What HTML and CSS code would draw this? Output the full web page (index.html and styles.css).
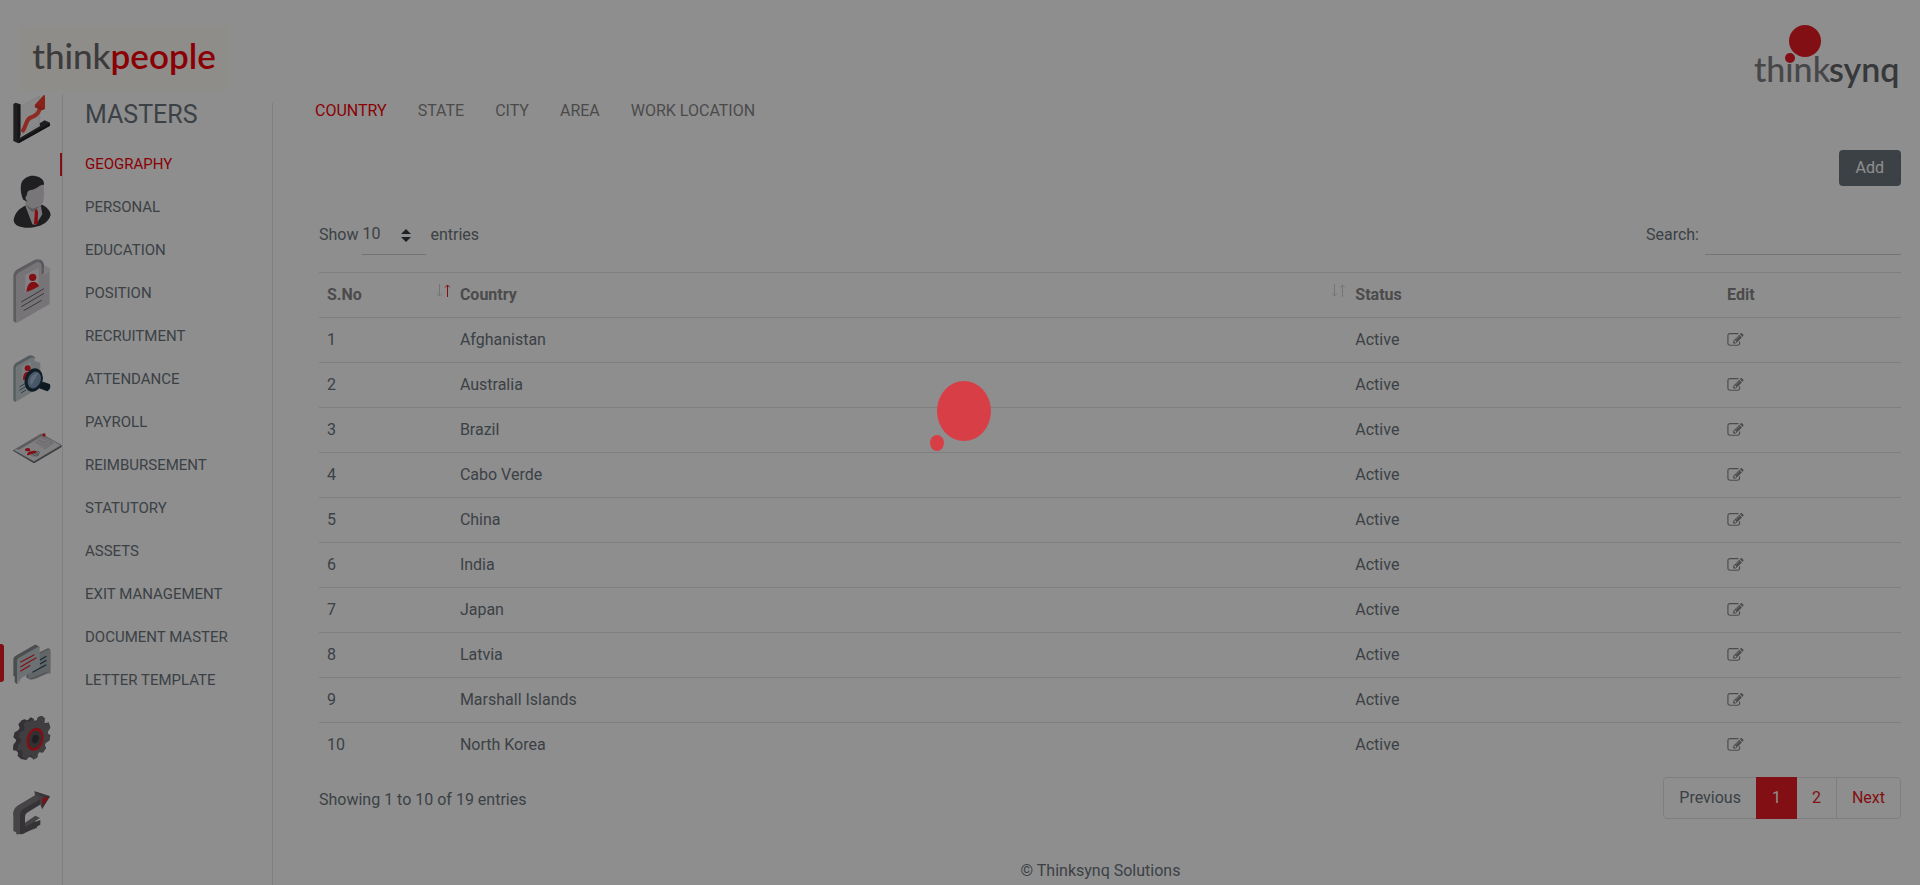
FILE: index.html
```html
<!DOCTYPE html>
<html lang="en">
<head>
<meta charset="utf-8">
<meta name="viewport" content="width=device-width, initial-scale=1">
<title>Masters - Geography</title>
<link rel="stylesheet" href="styles.css">
</head>
<body>
<svg class="defs" aria-hidden="true">
  <symbol id="edit" viewBox="0 0 1792 1536">
    <path d="M888 1056l116-116-152-152-116 116v56h96v96h56zm440-720q-16-16-33 1l-350 350q-17 17-1 33t33-1l350-350q17-17 1-33zm80 594v190q0 119-84.500 203.500t-203.500 84.500h-832q-119 0-203.500-84.500t-84.500-203.500v-832q0-119 84.500-203.500t203.500-84.500h832q63 0 117 25 15 7 18 23 3 17-9 29l-49 49q-14 14-32 8-23-6-45-6h-832q-66 0-113 47t-47 113v832q0 66 47 113t113 47h832q66 0 113-47t47-113v-126q0-13 9-22l64-64q15-15 35-7t20 29zm-96-738l288 288-672 672h-288v-288zm444 132l-92 92-288-288 92-92q28-28 68-28t68 28l152 152q28 28 28 68t-28 68z"/>
  </symbol>
</svg>
<div class="page">
  <header class="top">
    <a class="logo-people" href="#"><span>think</span><b>people</b></a>
    <a class="logo-synq" href="#" aria-label="thinksynq">
      <svg viewBox="0 0 150 70" role="img">
        <text class="synq-light" x="0" y="58">think</text>
        <text class="synq-bold" x="75" y="58">synq</text>
        <circle class="brand-fill" cx="51" cy="17" r="16"/>
        <circle class="brand-fill" cx="36" cy="34" r="5"/>
      </svg>
    </a>
  </header>
  <div class="body">
    <nav class="rail" aria-label="Modules">
      <div class="rail-group">
        <a href="#" aria-label="Dashboard">
          <svg width="38" height="50" viewBox="38 42 114 150">
            <path fill="#f1eff2" fill-opacity=".7" stroke="#c4c2c6" d="M60 80L118 48V134L60 166z"/>
            <path fill="#38363b" d="M39 72l7-4 14 5v95l-6 22-15-7z"/>
            <path fill="#29272c" d="M52 75l8-3v92l-8 24z"/>
            <path fill="#38363b" d="M54 176l65-38-1-8 15-9 16 7v9L55 190z"/>
            <path fill="#232126" d="M54 182l95-53v8L55 190z"/>
            <path fill="none" stroke="#ff4c3c" stroke-width="12" stroke-linejoin="round" stroke-linecap="round" d="M68 152c9-14 9-31 20-38 15-5 21-8 26-18l7-14"/>
            <path fill="#f7402f" d="M131 44l3 3v40l-10 4-20-9-1-7z"/>
            <path fill="#d93a30" d="M104 82l20 8 10-4-26-12z"/>
          </svg>
        </a>
        <a href="#" aria-label="Employees">
          <svg width="38" height="53" viewBox="38 284 114 159">
            <path fill="#38363b" d="M40 418c4-22 16-33 34-42l52-3c14 8 24 17 25 31-7 26-35 36-61 38-22 2-51-4-50-24z"/>
            <path fill="#d9d5da" d="M74 342c0-14 6-22 16-24l40-10 1 34c0 20-4 31-13 39l-22 8-20-12z"/>
            <path fill="#d9d5da" d="M74 374l22 13 26-9 4 24-20 32-10-2z"/>
            <path fill="#a8a4ab" d="M74 372l22 13 24-8-20 17-8-1z"/>
            <path fill="#ee1822" d="M104 389l6-2 3 9-1 36-9 1-2-4z"/>
            <path fill="#38363b" d="M84 366l-15-8c-8-14-10-40-5-52 8-14 24-22 40-19 17 2 29 13 27 27-10-5-21 14-40 15-9 3-11 7-11 16-7 4-5 15 4 21z"/>
          </svg>
        </a>
        <a href="#" aria-label="Profile">
          <svg width="38" height="65" viewBox="38 41 114 195">
            <path fill="#aaa6ad" d="M39 92c0-11 6-17 15-22l48-26c10-5 20-2 26 4l-76 44-4 141-9-5z"/>
            <path fill="#d4d0d4" d="M47 97c0-9 4-13 11-17l52-30c9-5 18-3 18 7v14l20 2v103l-95 55q-6 4-6-3z"/>
            <path fill="#a09ca4" d="M108 50c14-6 22-3 23 9v24l-7 4V64c0-10-4-14-16-14z"/>
            <path fill="#e4e1e4" d="M131 60l18 8v10l-19 12z"/>
            <path fill="#ebe8eb" d="M75 89l40-22v53l-41 23z"/>
            <circle cx="97" cy="96" r="11" fill="#e91b23"/>
            <path fill="#e91b23" d="M78 140c2-15 5-25 16-30h10c7 3 11 9 12 13l-20 10z"/>
            <path fill="none" stroke="#68646b" stroke-width="3" d="M63 170l68-40M63 184l68-40M70 196l54-31"/>
          </svg>
        </a>
        <a href="#" aria-label="Search records">
          <svg width="38" height="47" viewBox="38 326 114 141">
            <path fill="#98a5aa" d="M39 365c0-8 3-12 9-16l35-20c8-5 17-1 22 6l-56 36-2 96-8-4z"/>
            <path fill="#cbd3d6" d="M46 370c0-7 2-11 8-14l35-20c9-5 14-2 14 8l17 5v73l-69 42q-5 2-5-4z"/>
            <path fill="#dfe5e7" d="M66 360l26-15v46l-27 11z"/>
            <circle cx="82" cy="366" r="9" fill="#e91b23"/>
            <path fill="#e91b23" d="M68 401c0-14 3-22 11-24l12 1-3 20z"/>
            <path fill="none" stroke="#4c7285" stroke-width="3" d="M57 422l22-13M57 432l22-13M62 440l15-9"/>
            <path fill="#182c3b" d="M115 416l13-10 20 7c4 6 2 17-7 22l-25-9z"/>
            <ellipse cx="100" cy="401" rx="27" ry="36" fill="#1e3545" transform="rotate(15 100 401)"/>
            <ellipse cx="102" cy="401" rx="19" ry="26" fill="#819cba" transform="rotate(22 102 401)"/>
            <path fill="#a9c0da" d="M89 406c1-16 13-27 25-26l-20 36q-5-3-5-10z"/>
          </svg>
        </a>
        <a href="#" aria-label="Identity card">
          <svg width="49" height="30" viewBox="38 570 147 90">
            <path fill="#6a676d" d="M39 624l62 37 83-49v-5l-83 47-62-33z"/>
            <path fill="#e6e4e7" stroke="#7c797f" stroke-width="2" d="M40 622l83-49 60 34-82 49z"/>
            <path fill="#a9a6aa" d="M48 617l74-43 6 4-73 43z"/>
            <path fill="#c9c6cb" stroke="#a5a2a7" d="M105 598l26-20 28 22-25 18z"/>
            <path fill="none" stroke="#efecf0" stroke-width="2" d="M106 593l26 13 16-12M110 602l23 12 18-12M114 584l19 11 9-7"/>
            <circle cx="131" cy="576" r="5" fill="#e91b23"/>
            <ellipse cx="82" cy="620" rx="8" ry="5" fill="#e91b23"/>
            <path fill="#e91b23" d="M80 637c0-9 8-14 15-12 8-3 14-1 15 3l-26 9z"/>
            <path fill="none" stroke="#5a575c" stroke-width="2" d="M93 637l23-12M98 640l21-11M106 641l10-6"/>
          </svg>
        </a>
      </div>
      <div class="rail-group">
        <a class="rail-active" href="#" aria-label="Masters">
          <svg width="38" height="41" viewBox="38 40 114 123">
            <path fill="#989da0" d="M78 84l64-31q8-1 8 6v71l-4-4-41 18-13 3-14-6z"/>
            <path fill="#b0b7ba" d="M84 84l60-27q6-1 6 5v55l-3 2v11l-8-7-55 23z"/>
            <path fill="none" stroke="#24425c" stroke-width="3.500" d="M96 125l42-23M119 100l19-11M119 88l19-11"/>
            <path fill="#858c8f" d="M39 85q1-6 6-9l57-33q6-2 11 3l6 5-66 47-2 63-8-6v-17l-4-3z"/>
            <path fill="#c3cdd0" d="M50 90q1-6 6-9l55-31q7-3 7 5v50q0 5-5 8l-51 30-8 18v-15l-4-4z"/>
            <path fill="none" stroke="#e91b23" stroke-width="3.500" d="M60 95l42-23M60 109l48-28M60 122l30-18"/>
          </svg>
        </a>
        <a href="#" aria-label="Settings">
          <svg width="38" height="44" viewBox="38 257 114 132">
            <path fill="#5c585e" d="M82 270l9-9 9 4 3 7 6-2 4-10 9-3 11 6-1 14 4 2 9-3 5 15-8 12v7l8 4-3 15-11 7-3 8 4 8-9 13-11-1-5 6-1 10-12 6-9-6-6 1-6 8-16-3-10-9 1-10-5-6-10-1 1-17 8-10v-5l-8-7 4-15 11-6 4-7-4-11 10-12 8-3z"/>
            <path fill="#737075" d="M88 274l9-9 6 9 7-3 4-9 12-5 7 7-1 14 5 3 8-3 5 15-8 12v7l8 4-3 15-11 7-3 8 4 8-9 13-11-1-5 6-1 10-12 6-4-13-6 1-9 11-15-8 2-15-5-5-11 2 2-17 10-9v-8l-9-6 5-15 10-5 4-8-3-11 9-11 7 4z"/>
            <ellipse cx="104" cy="327" rx="25" ry="35" fill="#e91b23" transform="rotate(16 104 327)"/>
            <ellipse cx="104" cy="327" rx="18" ry="27" fill="#59565b" transform="rotate(16 104 327)"/>
            <path fill="#39373b" d="M98 316l11-3 7 7-4 14-10 6-8-9z"/>
          </svg>
        </a>
        <a href="#" aria-label="Sign out">
          <svg width="38" height="44" viewBox="38 482 114 132">
            <path fill="#757277" d="M39 549q1-15 13-23l52-31-2-12 47 15-24 37-6-14-48 28q-6 4-6 12v27l31-19 14 7v17l-51 18q-9 2-10 1-1 0-1-3z"/>
            <path fill="#7f7b80" d="M39 547q2-13 13-21l55-30 12 12-49 29q-10 6-10 17z"/>
            <path fill="#7f7b80" d="M39 547l20 7v57l-20-9z"/>
            <path fill="#5f5c61" d="M59 555q0-13 10-19l50-29v16l-39 24q-6 4-6 12v27l46-17v14l-52 28-9 1z"/>
            <path fill="#7a777d" d="M74 577l31-21 14 7-44 27z"/>
            <path fill="#5f5c61" d="M102 483l47 15-24 39v-29l7-6z"/>
            <path fill="#e91b23" d="M126 504l19-4-18 27z"/>
          </svg>
        </a>
      </div>
    </nav>

    <aside class="menu">
      <h1>MASTERS</h1>
      <nav aria-label="Masters">
        <a class="active" href="#">GEOGRAPHY</a>
        <a href="#">PERSONAL</a>
        <a href="#">EDUCATION</a>
        <a href="#">POSITION</a>
        <a href="#">RECRUITMENT</a>
        <a href="#">ATTENDANCE</a>
        <a href="#">PAYROLL</a>
        <a href="#">REIMBURSEMENT</a>
        <a href="#">STATUTORY</a>
        <a href="#">ASSETS</a>
        <a href="#">EXIT MANAGEMENT</a>
        <a href="#">DOCUMENT MASTER</a>
        <a href="#">LETTER TEMPLATE</a>
      </nav>
    </aside>

    <div class="content">
      <main>
        <nav class="tabs" aria-label="Geography">
          <a class="active" href="#">COUNTRY</a>
          <a href="#">STATE</a>
          <a href="#">CITY</a>
          <a href="#">AREA</a>
          <a href="#">WORK LOCATION</a>
        </nav>
        <div class="panel">
          <div class="actions"><button class="add" type="button">Add</button></div>
          <div class="controls">
            <div class="length">
              <label for="length">Show</label>
              <span class="select-wrap">
                <select id="length"><option>10</option><option>25</option><option>50</option><option>100</option></select>
                <svg width="10" height="13" viewBox="0 0 10 13" aria-hidden="true"><path d="M5 0l5 5H0zM5 13L0 8h10z"/></svg>
              </span>
              <span>entries</span>
            </div>
            <div class="search">
              <label for="search">Search:</label>
              <input id="search" type="search">
            </div>
          </div>
          <table>
            <colgroup><col class="c-no"><col class="c-country"><col class="c-status"><col class="c-edit"></colgroup>
            <thead>
              <tr>
                <th scope="col"><div class="head">S.No<svg class="sort sorted" width="14" height="13" viewBox="0 0 14 13"><path class="down" d="M3.500 0v12M1 9.500l2.500 2.500L6 9.500"/><path class="up" d="M11.500 13V1M9 3.500L11.500 1 14 3.500"/></svg></div></th>
                <th scope="col"><div class="head">Country<svg class="sort" width="14" height="13" viewBox="0 0 14 13"><path class="down" d="M3.500 0v12M1 9.500l2.500 2.500L6 9.500"/><path class="up" d="M11.500 13V1M9 3.500L11.500 1 14 3.500"/></svg></div></th>
                <th scope="col">Status</th>
                <th scope="col">Edit</th>
              </tr>
            </thead>
            <tbody>
              <tr><td>1</td><td>Afghanistan</td><td>Active</td><td><button class="edit" type="button" aria-label="Edit Afghanistan"><svg><use href="#edit"/></svg></button></td></tr>
              <tr><td>2</td><td>Australia</td><td>Active</td><td><button class="edit" type="button" aria-label="Edit Australia"><svg><use href="#edit"/></svg></button></td></tr>
              <tr><td>3</td><td>Brazil</td><td>Active</td><td><button class="edit" type="button" aria-label="Edit Brazil"><svg><use href="#edit"/></svg></button></td></tr>
              <tr><td>4</td><td>Cabo Verde</td><td>Active</td><td><button class="edit" type="button" aria-label="Edit Cabo Verde"><svg><use href="#edit"/></svg></button></td></tr>
              <tr><td>5</td><td>China</td><td>Active</td><td><button class="edit" type="button" aria-label="Edit China"><svg><use href="#edit"/></svg></button></td></tr>
              <tr><td>6</td><td>India</td><td>Active</td><td><button class="edit" type="button" aria-label="Edit India"><svg><use href="#edit"/></svg></button></td></tr>
              <tr><td>7</td><td>Japan</td><td>Active</td><td><button class="edit" type="button" aria-label="Edit Japan"><svg><use href="#edit"/></svg></button></td></tr>
              <tr><td>8</td><td>Latvia</td><td>Active</td><td><button class="edit" type="button" aria-label="Edit Latvia"><svg><use href="#edit"/></svg></button></td></tr>
              <tr><td>9</td><td>Marshall Islands</td><td>Active</td><td><button class="edit" type="button" aria-label="Edit Marshall Islands"><svg><use href="#edit"/></svg></button></td></tr>
              <tr><td>10</td><td>North Korea</td><td>Active</td><td><button class="edit" type="button" aria-label="Edit North Korea"><svg><use href="#edit"/></svg></button></td></tr>
            </tbody>
          </table>
          <div class="table-foot">
            <p>Showing 1 to 10 of 19 entries</p>
            <nav class="pages" aria-label="Pagination">
              <a class="disabled" href="#">Previous</a>
              <a class="current" href="#">1</a>
              <a href="#">2</a>
              <a href="#">Next</a>
            </nav>
          </div>
        </div>
      </main>
      <footer>© Thinksynq Solutions</footer>
    </div>
  </div>
</div>
<div class="overlay" role="status" aria-label="Loading">
  <svg width="64" height="72" viewBox="0 0 64 72">
    <ellipse cx="35" cy="31" rx="27" ry="30"/>
    <ellipse cx="8" cy="63" rx="7" ry="8"/>
  </svg>
</div>
</body>
</html>
```
FILE: styles.css
```css
:root {
  --brand: #ea1b23;
  --red: #fa0008;
  --text: #6c757d;
  --line: #e4e4e4;
}

* {
  box-sizing: border-box;
}

body {
  margin: 0;
  background: #fff;
  color: var(--text);
  font: 16px/24px Roboto, "Liberation Sans", sans-serif;
}

a {
  color: inherit;
  text-decoration: none;
}

button,
input,
select {
  font: inherit;
  color: inherit;
}

svg {
  display: block;
}

.defs {
  display: none;
}

.page {
  display: flex;
  flex-direction: column;
  min-height: 100vh;
}

.top {
  display: flex;
  justify-content: space-between;
  padding: 24px 16px 0 19px;
}

.logo-people {
  display: flex;
  align-items: center;
  justify-content: center;
  width: 210px;
  height: 65px;
  margin-top: 2px;
  padding-bottom: 7px;
  background: #fffdf8;
  color: #6c6a6b;
  font: 500 35px/48px Lato, sans-serif;
}

.logo-people b {
  color: var(--red);
  font-weight: 600;
}

.logo-synq svg {
  width: 150px;
  height: 70px;
}

.synq-light,
.synq-bold {
  font: 500 34px Lato, sans-serif;
  fill: #808083;
}

.synq-bold {
  font-weight: 600;
  fill: #646569;
}

.brand-fill {
  fill: var(--brand);
}

.body {
  display: flex;
  flex: 1;
}

.rail {
  display: flex;
  flex-direction: column;
  justify-content: space-between;
  width: 63px;
  padding-bottom: 50px;
  border-right: 1px solid var(--line);
}

.rail-group {
  display: flex;
  flex-direction: column;
  gap: 31px;
}

.rail-group a {
  padding-left: 13px;
}

.rail-active {
  position: relative;
}

.rail-active::before {
  content: "";
  position: absolute;
  left: 0;
  top: 0;
  width: 4px;
  height: 38px;
  border-radius: 0 3px 3px 0;
  background: var(--brand);
}

.menu {
  width: 210px;
  margin-top: 9px;
  border-right: 1px solid var(--line);
}

.menu h1 {
  margin: 0 0 16px;
  padding-left: 22px;
  font-size: 25px;
  font-weight: 400;
  line-height: 24px;
}

.menu nav a {
  display: block;
  position: relative;
  padding: 10px 0 10px 22px;
  font-size: 15px;
  line-height: 23px;
}

.menu nav .active,
.tabs .active {
  color: var(--red);
}

.menu nav .active::before {
  content: "";
  position: absolute;
  left: -3px;
  top: 10px;
  bottom: 10px;
  width: 2px;
  background: var(--brand);
}

.content {
  display: flex;
  flex: 1;
  flex-direction: column;
  justify-content: space-between;
  padding: 5px 19px 2px 27px;
}

.tabs {
  display: flex;
  gap: 31px;
  padding-left: 15px;
  color: #888;
}

.panel {
  padding-left: 19px;
}

.actions {
  display: flex;
  justify-content: flex-end;
  padding: 27px 0 29px;
}

.add {
  height: 36px;
  padding: 0 17px;
  border: 0;
  border-radius: 4px;
  background: #6c757d;
  color: #fff;
}

.controls,
.table-foot {
  display: flex;
  justify-content: space-between;
}

.controls {
  height: 57px;
}

.length,
.search {
  display: flex;
  align-items: center;
  height: 40px;
}

.length {
  gap: 4px;
}

.select-wrap {
  position: relative;
}

.select-wrap svg {
  position: absolute;
  right: 15px;
  top: 14px;
  fill: #343a40;
  pointer-events: none;
}

.length select {
  appearance: none;
  width: 64px;
  height: 40px;
  padding: 0 0 2px;
  border: 0;
  border-bottom: 1px solid #d0d0d0;
  border-radius: 0;
  background: transparent;
}

.search {
  gap: 6px;
}

.search input {
  width: 196px;
  height: 40px;
  padding: 0;
  border: 0;
  border-bottom: 1px solid #d0d0d0;
  background: transparent;
}

table {
  width: 100%;
  border-collapse: collapse;
  table-layout: fixed;
}

.c-no { width: 8.4%; }
.c-country { width: 56.6%; }
.c-status { width: 23.5%; }
.c-edit { width: 11.5%; }

th,
td {
  padding: 10px 8px;
  border-top: 1px solid #dee2e6;
  text-align: left;
}

th {
  color: #888;
  font-weight: 700;
}

.head {
  display: flex;
  justify-content: space-between;
  margin-right: -6px;
}

.sort {
  margin-top: 1px;
  fill: none;
  stroke: #d0d0d0;
}

.sorted .up {
  stroke: var(--brand);
}

.edit {
  display: block;
  padding: 0;
  border: 0;
  background: none;
}

.edit svg {
  width: 17px;
  height: 14px;
  fill: #888;
}

.table-foot {
  padding-top: 10px;
}

.table-foot p {
  margin: 11px 0 0;
}

.pages {
  display: flex;
  border: 1px solid #dee2e6;
  border-radius: 4px;
  color: var(--brand);
}

.pages a {
  padding: 8px 15px;
}

.pages a:last-child {
  border-left: 1px solid #dee2e6;
}

.pages .disabled {
  color: var(--text);
}

.pages .current {
  margin: -1px 0;
  padding: 9px 16px;
  background: var(--brand);
  color: #fff;
}

footer {
  text-align: center;
}

.overlay {
  position: fixed;
  inset: 0;
  display: flex;
  align-items: center;
  justify-content: center;
  padding: 0 0 53px 2px;
  background: rgba(0, 0, 0, 0.443);
}

.overlay svg {
  fill: #dc3a42;
  fill-opacity: 0.95;
}
```
